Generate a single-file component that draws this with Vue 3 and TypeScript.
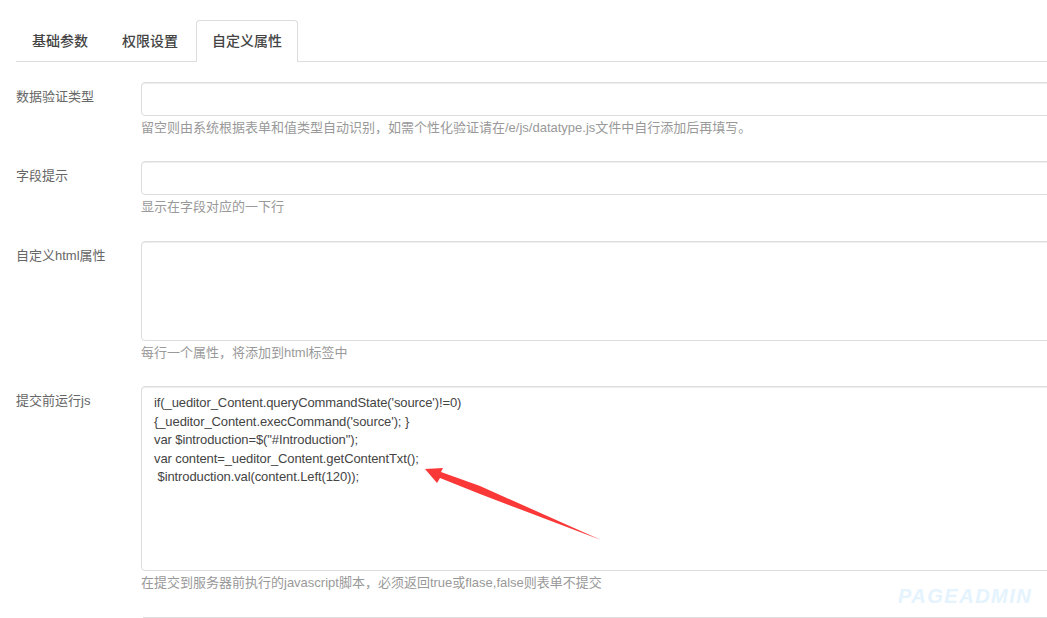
<script setup lang="ts">
interface Field {
  label: string
  help: string
  kind: 'input' | 'textarea'
  size?: string
  value?: string
}

const tabs = ['基础参数', '权限设置', '自定义属性']
const code = `if(_ueditor_Content.queryCommandState('source')!=0)
{_ueditor_Content.execCommand('source'); }
var $introduction=$("#Introduction");
var content=_ueditor_Content.getContentTxt();
 $introduction.val(content.Left(120));`

const fields: Field[] = [
  { label: '数据验证类型', kind: 'input', help: '留空则由系统根据表单和值类型自动识别，如需个性化验证请在/e/js/datatype.js文件中自行添加后再填写。' },
  { label: '字段提示', kind: 'input', help: '显示在字段对应的一下行' },
  { label: '自定义html属性', kind: 'textarea', size: 'mid', help: '每行一个属性，将添加到html标签中' },
  { label: '提交前运行js', kind: 'textarea', size: 'tall', value: code, help: '在提交到服务器前执行的javascript脚本，必须返回true或flase,false则表单不提交' },
]
</script>

<template>
  <div class="page">
    <ul class="tabs">
      <li v-for="(t, i) in tabs" :key="t" class="tab" :class="{ active: i === 2 }">{{ t }}</li>
    </ul>
    <form class="form">
      <div v-for="f in fields" :key="f.label" class="row">
        <label class="label">{{ f.label }}</label>
        <div class="control">
          <input v-if="f.kind === 'input'" class="box single" type="text" />
          <textarea v-else class="box area" :class="f.size" :value="f.value" readonly></textarea>
          <p class="help">{{ f.help }}</p>
        </div>
      </div>
    </form>
    <div class="rule"></div>
    <svg class="arrow" width="190" height="85" viewBox="0 0 190 85">
      <polygon points="5,9 23,8 21,12 60,26 181,80 60,34 20,18 17,23" fill="#fa3838" />
    </svg>
    <span class="mark">PAGEADMIN</span>
  </div>
</template>

<style>
html, body { margin: 0; background: #fff; overflow: hidden; }
</style>

<style scoped>
.page {
  position: relative;
  width: 1047px;
  height: 618px;
  overflow: hidden;
  background: #fff;
  font-family: "Liberation Sans", "Noto Sans CJK SC", sans-serif;
  font-size: 13px;
  color: #666;
}
.tabs {
  display: flex;
  gap: 2px;
  list-style: none;
  margin: 0 0 0 16px;
  padding: 20px 0 0;
  height: 41px;
  border-bottom: 1px solid #ddd;
}
.tab {
  box-sizing: border-box;
  height: 42px;
  padding: 0 15px;
  border: 1px solid transparent;
  border-bottom: 0;
  border-radius: 4px 4px 0 0;
  font-size: 14px;
  font-weight: 500;
  line-height: 40px;
  color: #444;
}
.tab.active {
  background: #fff;
  border-color: #ddd;
}
.form {
  padding: 20px 0 0 16px;
}
.row {
  display: flex;
  margin-bottom: 24px;
}
.label {
  flex: 0 0 125px;
  line-height: 19px;
  padding-top: 5px;
}
.control {
  flex: 0 0 940px;
}
.box {
  display: block;
  box-sizing: border-box;
  width: 100%;
  padding: 7px 12px 6px;
  border: 1px solid #ddd;
  border-radius: 4px;
  box-shadow: inset 0 1px 1px rgba(0, 0, 0, 0.075);
  background: #fff;
  font-family: inherit;
  font-size: 13px;
  letter-spacing: -0.1px;
  line-height: 18.5px;
  color: #444;
  outline: none;
}
.single { height: 34px; }
.area { resize: none; }
.mid { height: 100px; }
.tall { height: 184.6px; }
.help {
  margin: 3px 0 0;
  height: 18.4px;
  line-height: 18.4px;
  color: #999;
}
.rule {
  position: absolute;
  left: 143px;
  right: 0;
  top: 617px;
  height: 1px;
  background: #ddd;
}
.arrow {
  position: absolute;
  left: 420px;
  top: 460px;
}
.mark {
  position: absolute;
  left: 898px;
  top: 585px;
  font-size: 20px;
  line-height: 22px;
  font-weight: 700;
  font-style: italic;
  letter-spacing: 1.5px;
  color: #e4f3fd;
}
</style>
